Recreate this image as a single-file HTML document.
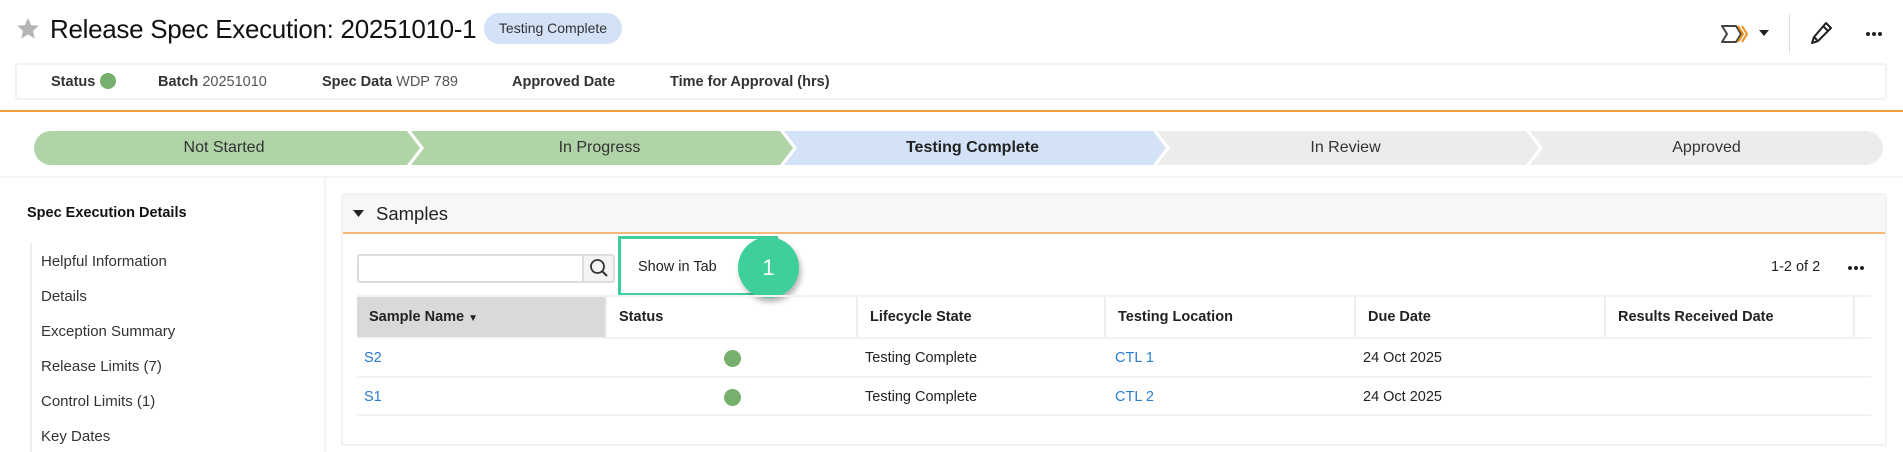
<!DOCTYPE html>
<html><head><meta charset="utf-8"><style>
*{margin:0;padding:0;box-sizing:border-box}
body{width:1903px;height:452px;background:#fff;font-family:"Liberation Sans",Arial,sans-serif;color:#222;position:relative;overflow:hidden}
.a{position:absolute;white-space:nowrap}
.seg{position:absolute;top:131px;height:34px;line-height:34px;text-align:center;font-size:16px;color:#333}
.th{position:absolute;top:297px;height:40px;line-height:40px;font-size:14.5px;font-weight:bold;border-right:2px solid #eee;padding-left:12px}
.td{position:absolute;font-size:14.5px;line-height:20px}
.side{position:absolute;left:41px;font-size:15px;color:#333}
.dot{position:absolute;width:17px;height:17px;border-radius:50%;background:#76b06c}
.md{position:absolute;width:4px;height:4px;border-radius:50%;background:#222}
</style></head><body>
<svg class="a" style="left:16px;top:17px" width="24" height="24" viewBox="0 0 24 24"><path d="M12 1l3.2 7.1 7.6.7-5.8 5.1 1.8 7.6L12 17.5 5.2 21.5 7 13.9 1.2 8.8l7.6-.7z" fill="#b5b5b5"/></svg>
<div class="a" style="left:50px;top:13px;font-size:26px;line-height:32px;color:#111;letter-spacing:-0.3px">Release Spec Execution: 20251010-1</div>
<div class="a" style="left:484px;top:13px;width:138px;height:31px;border-radius:16px;background:#d3e2f7;font-size:14px;line-height:31px;text-align:center;color:#333">Testing Complete</div>
<svg class="a" style="left:1720px;top:22px" width="30" height="24" viewBox="0 0 30 24"><path d="M2 4h14l5 8-5 8H2l5-8z" fill="#fff" stroke="#444" stroke-width="2" stroke-linejoin="round"/><path d="M18 4l5 8-5 8M22 4l5 8-5 8" fill="none" stroke="#f0901e" stroke-width="2"/></svg>
<svg class="a" style="left:1759px;top:30px" width="10" height="6"><path d="M0 0h10L5 6z" fill="#222"/></svg>
<div class="a" style="left:1789px;top:14px;width:1px;height:39px;background:#ddd"></div>
<svg class="a" style="left:1809px;top:21px" width="24" height="25" viewBox="0 0 24 25"><path d="M17 2l5 5L9 20l-6 2 2-6z M14 5l5 5 M5 16l3 3" fill="none" stroke="#222" stroke-width="2" stroke-linejoin="round"/></svg>
<div class="md" style="left:1866px;top:32px"></div><div class="md" style="left:1872px;top:32px"></div><div class="md" style="left:1878px;top:32px"></div>
<div class="a" style="left:15px;top:63px;width:1872px;height:37px;border:2px solid #f2f2f2;border-radius:3px"></div>
<div class="a" style="left:51px;top:73px;font-size:14.5px;line-height:18px;color:#333"><b>Status</b></div>
<div class="dot" style="left:100px;top:73px;width:16px;height:16px"></div>
<div class="a" style="left:158px;top:73px;font-size:14.5px;line-height:18px;color:#555"><b style="color:#333">Batch</b> 20251010</div>
<div class="a" style="left:322px;top:73px;font-size:14.5px;line-height:18px;color:#555"><b style="color:#333">Spec Data</b> WDP 789</div>
<div class="a" style="left:512px;top:73px;font-size:14.5px;line-height:18px;color:#333"><b>Approved Date</b></div>
<div class="a" style="left:670px;top:73px;font-size:14.5px;line-height:18px;color:#333"><b>Time for Approval (hrs)</b></div>
<div class="a" style="left:0;top:110px;width:1903px;height:2px;background:#f29a3e"></div>
<svg class="a" style="left:0;top:131px" width="1903" height="34">
<path d="M51 0H407L420 17 407 34H51A17 17 0 0 1 51 0z" fill="#b0d3a7"/>
<path d="M411 0H780L793 17 780 34H411L424 17z" fill="#b0d3a7"/>
<path d="M784 0H1153L1166 17 1153 34H784L797 17z" fill="#d3e2f7"/>
<path d="M1157 0H1526L1539 17 1526 34H1157L1170 17z" fill="#ececec"/>
<path d="M1530 0H1866A17 17 0 0 1 1866 34H1530L1543 17z" fill="#ececec"/>
</svg>
<div class="seg" style="left:34px;width:380px">Not Started</div>
<div class="seg" style="left:413px;width:373px">In Progress</div>
<div class="seg" style="left:786px;width:373px;font-weight:bold;color:#222">Testing Complete</div>
<div class="seg" style="left:1159px;width:373px">In Review</div>
<div class="seg" style="left:1532px;width:349px">Approved</div>
<div class="a" style="left:0;top:176px;width:1903px;height:2px;background:#f4f4f4"></div>
<div class="a" style="left:324px;top:178px;width:2px;height:274px;background:#f2f2f2"></div>
<div class="a" style="left:27px;top:205px;font-size:14.5px;font-weight:bold;color:#111">Spec Execution Details</div>
<div class="a" style="left:30px;top:243px;width:2px;height:209px;background:#eee"></div>
<div class="side" style="top:253px">Helpful Information</div>
<div class="side" style="top:288px">Details</div>
<div class="side" style="top:323px">Exception Summary</div>
<div class="side" style="top:358px">Release Limits (7)</div>
<div class="side" style="top:393px">Control Limits (1)</div>
<div class="side" style="top:428px">Key Dates</div>
<div class="a" style="left:341px;top:193px;width:1546px;height:253px;border:2px solid #f2f2f2;border-radius:3px"></div>
<div class="a" style="left:343px;top:195px;width:1542px;height:39px;background:#f7f7f7;border-bottom:2px solid #f5b97a"></div>
<svg class="a" style="left:353px;top:210px" width="11" height="8"><path d="M0 0h11L5.5 7z" fill="#222"/></svg>
<div class="a" style="left:376px;top:202px;font-size:18.5px;line-height:24px;color:#222">Samples</div>
<div class="a" style="left:357px;top:254px;width:225px;height:29px;border:2px solid #ddd;border-right:none;border-radius:3px 0 0 3px"></div>
<div class="a" style="left:582px;top:254px;width:33px;height:29px;border:2px solid #ddd;background:#f4f4f4;border-radius:0 3px 3px 0"></div>
<svg class="a" style="left:588px;top:257px" width="22" height="22" viewBox="0 0 22 22"><circle cx="9.5" cy="9.5" r="6.5" fill="none" stroke="#333" stroke-width="1.8"/><path d="M14 14l5 5" stroke="#333" stroke-width="2"/></svg>
<div class="a" style="left:618px;top:236px;width:160px;height:60px;border:3px solid #3ecf9a"></div>
<div class="a" style="left:638px;top:259px;font-size:14.5px;color:#222">Show in Tab</div>
<div class="a" style="left:738px;top:237px;width:61px;height:61px;border-radius:50%;background:#3ecf9a;box-shadow:2px 4px 6px rgba(0,0,0,.3);color:#fff;font-size:22px;line-height:61px;text-align:center">1</div>
<div class="a" style="left:1771px;top:259px;font-size:14.5px;color:#222">1-2 of 2</div>
<div class="md" style="left:1848px;top:266px"></div><div class="md" style="left:1854px;top:266px"></div><div class="md" style="left:1860px;top:266px"></div>
<div class="a" style="left:357px;top:295px;width:1514px;height:2px;background:#f2f2f2"></div>
<div class="th" style="left:357px;width:250px;background:#d9d9d9">Sample Name <span style="font-size:10px">▼</span></div>
<div class="th" style="left:607px;width:251px">Status</div>
<div class="th" style="left:858px;width:248px">Lifecycle State</div>
<div class="th" style="left:1106px;width:250px">Testing Location</div>
<div class="th" style="left:1356px;width:250px">Due Date</div>
<div class="th" style="left:1606px;width:249px">Results Received Date</div>
<div class="a" style="left:357px;top:337px;width:1514px;height:2px;background:#f2f2f2"></div>
<div class="a" style="left:357px;top:376px;width:1514px;height:2px;background:#f2f2f2"></div>
<div class="a" style="left:357px;top:414px;width:1514px;height:2px;background:#f2f2f2"></div>
<div class="td" style="left:364px;top:348px;color:#2a7ccf">S2</div>
<div class="dot" style="left:724px;top:350px"></div>
<div class="td" style="left:865px;top:348px">Testing Complete</div>
<div class="td" style="left:1115px;top:348px;color:#2a7ccf">CTL 1</div>
<div class="td" style="left:1363px;top:348px">24 Oct 2025</div>
<div class="td" style="left:364px;top:387px;color:#2a7ccf">S1</div>
<div class="dot" style="left:724px;top:389px"></div>
<div class="td" style="left:865px;top:387px">Testing Complete</div>
<div class="td" style="left:1115px;top:387px;color:#2a7ccf">CTL 2</div>
<div class="td" style="left:1363px;top:387px">24 Oct 2025</div>
</body></html>
